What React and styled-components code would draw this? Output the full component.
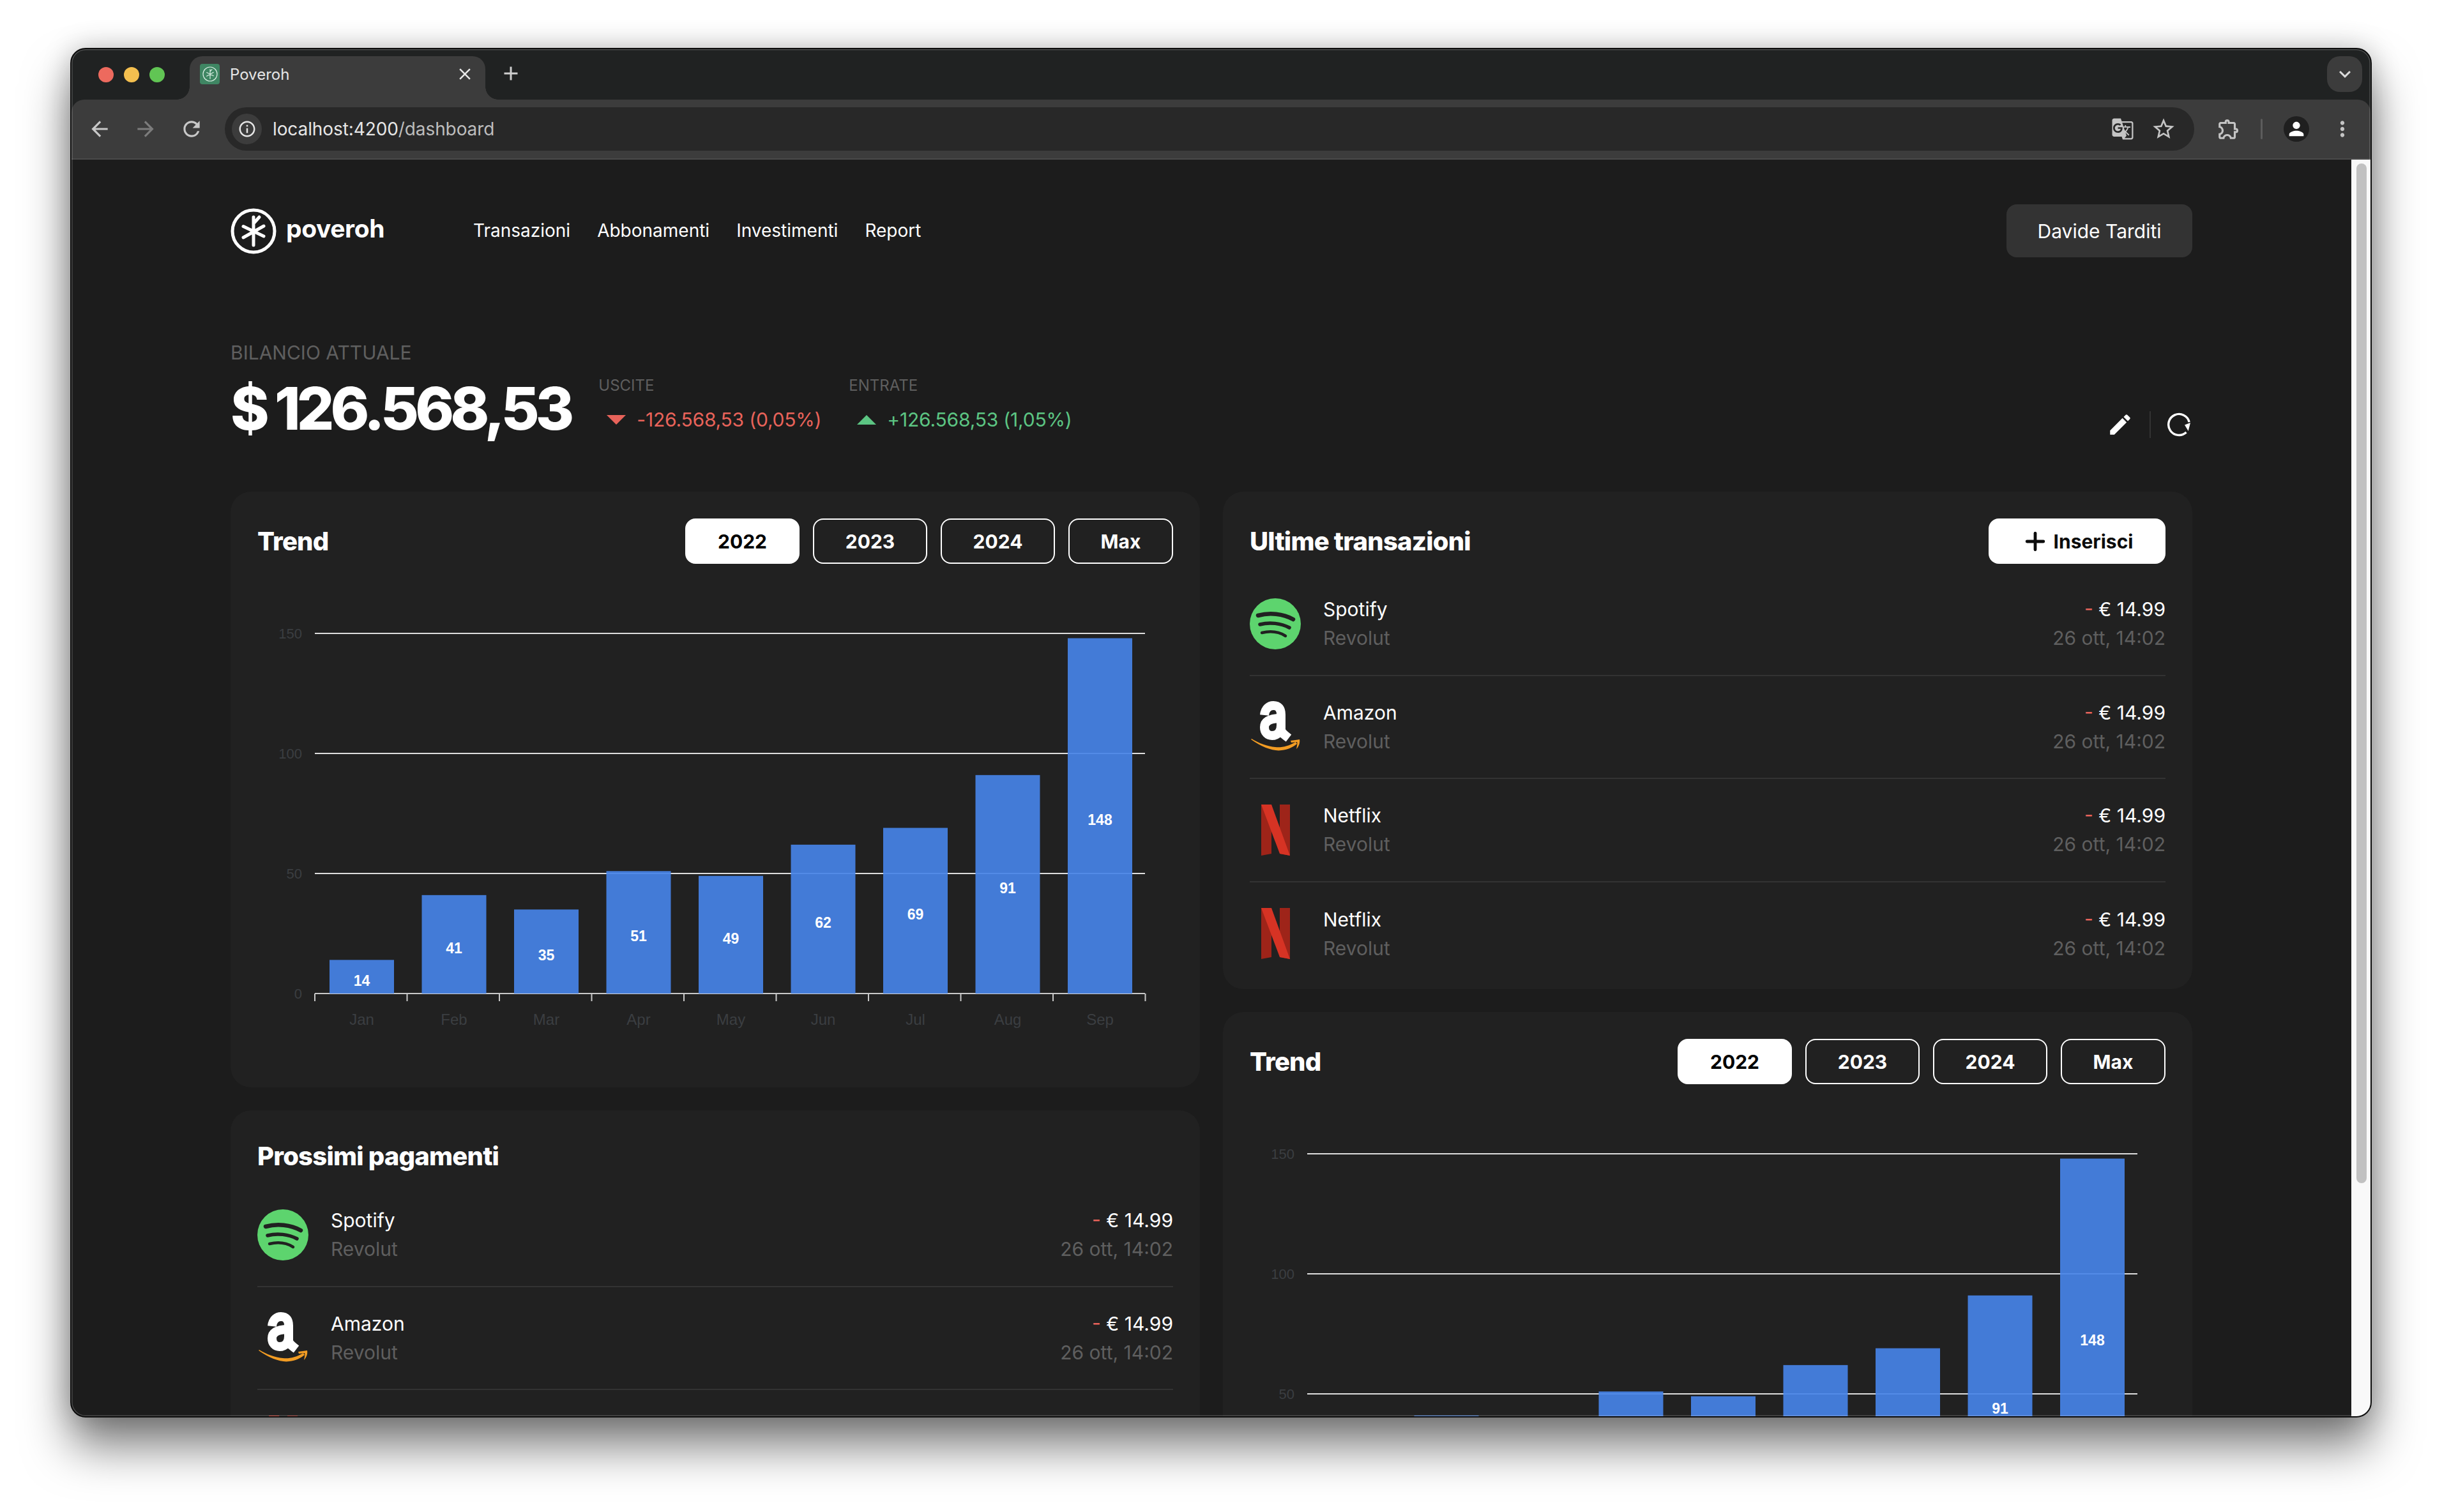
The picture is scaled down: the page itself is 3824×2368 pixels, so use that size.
import React from "react";
import styled, { createGlobalStyle } from "styled-components";
import { Plus } from "lucide-react";
import {
  MdArrowBack, MdArrowForward, MdRefresh, MdInfoOutline, MdStarBorder, MdGTranslate,
  MdOutlineExtension, MdPerson, MdMoreVert, MdKeyboardArrowDown, MdClose, MdAdd, MdEdit,
} from "react-icons/md";

const Global = createGlobalStyle`
  html, body { margin: 0; padding: 0; background: #fff; overflow: hidden; }
  * { box-sizing: border-box; }
  body { font-family: Inter, "Liberation Sans", sans-serif; }
`;

const Stage = styled.div`
  width: 3824px; height: 2368px; padding: 75px 110px 148px; background: #fff;
`;
const Window = styled.div`
  position: relative; height: 100%; display: flex; flex-direction: column; overflow: hidden;
  border-radius: 24px; border: 2px solid #0c0c0c; background: #202222;
  box-shadow: 0 46px 72px rgba(0,0,0,.5), 0 0 44px rgba(0,0,0,.22);
  &::after {
    content: ""; position: absolute; inset: 0; border-radius: 22px; pointer-events: none;
    box-shadow: inset 0 0 0 1.5px rgba(255,255,255,.2);
  }
`;
const TabStrip = styled.div`
  height: 79px; flex: none; background: #202222; display: flex; align-items: flex-end; padding-left: 42px;
`;
const Dots = styled.div`display: flex; gap: 16px; align-self: flex-start; margin-top: 28px; margin-right: 39px;`;
const Dot = styled.span`width: 24px; height: 24px; border-radius: 50%; background: ${p => p.$c};`;
const Tab = styled.div`
  position: relative; width: 463px; height: 68px; background: #3c3c3c; border-radius: 20px 20px 0 0;
  display: flex; align-items: flex-start; padding: 12px 16px 0; color: #e6e6e6; font-size: 24px; font-weight: 400;
  &::before, &::after {
    content: ""; position: absolute; bottom: 0; width: 20px; height: 20px;
  }
  &::before { left: -20px; background: radial-gradient(circle at 0 0, transparent 19.5px, #3c3c3c 20px); }
  &::after { right: -20px; background: radial-gradient(circle at 100% 0, transparent 19.5px, #3c3c3c 20px); }
`;
const Favicon = styled.span`
  width: 31px; height: 32px; border-radius: 4px; background: #3f8663; display: flex; align-items: center; justify-content: center; margin-right: 16px;
`;
const TabTitle = styled.span`flex: 1; line-height: 34px;`;
const TabClose = styled.span`display: flex; color: #e6e6e6; margin: 1px 0 0; position: relative; left: -1px; font-size: 30px;`;
const NewTab = styled.span`display: flex; color: #cfcfcf; font-size: 36px; align-self: flex-start; margin: 20px 0 0 22px;`;
const Collapse = styled.span`
  margin-left: auto; margin-right: 13px; align-self: flex-start; margin-top: 11px; width: 55px; height: 56px;
  border-radius: 20px; background: #3c3c3c; color: #dcdcdc; display: flex; align-items: center; justify-content: center; font-size: 36px;
`;
const Toolbar = styled.div`
  height: 94px; flex: none; background: #3c3c3c; border-bottom: 2px solid #4a4a4a; display: flex; align-items: center; padding-left: 8px;
  border-radius: 20px 20px 0 0;
`;
const NavBtn = styled.span`width: 72px; display: flex; justify-content: center; color: ${p => p.$dim ? "#7c7c7c" : "#c8c8c8"}; font-size: 38px;`;
const Omnibox = styled.div`
  margin-left: 16px; width: 3084px; height: 68px; border-radius: 34px; background: #282828; display: flex; align-items: center; padding: 0 28px 0 11px;
`;
const InfoPill = styled.span`
  width: 47px; height: 48px; border-radius: 50%; background: #3c3c3c; display: flex; align-items: center; justify-content: center; color: #e6e6e6; font-size: 30px; margin-right: 17px;
`;
const Url = styled.span`flex: 1; color: #e6e6e6; font-size: 28px; font-weight: 400; letter-spacing: -.1px;`;
const UrlPath = styled.span`color: #bdbdbd;`;
const BoxIcon = styled.span`display: flex; color: #c4c4c4; font-size: ${p => p.$s || 38}px; margin-left: ${p => p.$ml || 0}px;`;
const Sep = styled.span`width: 3px; height: 32px; background: #5c5c5c; margin: 0 33px 0 31px; border-radius: 2px;`;
const Avatar = styled.span`width: 40px; height: 40px; border-radius: 50%; background: #1f1f1f; color: #fff; display: flex; align-items: center; justify-content: center; font-size: 34px;`;

const Viewport = styled.div`flex: 1; min-height: 0; display: flex; background: #1c1c1c;`;
const Page = styled.div`flex: 1; min-width: 0; overflow: hidden; padding: 70px 249px 0; color: #fff;`;
const Scrollbar = styled.div`width: 30px; flex: none; background: #f9f9f9; padding: 6px 6px 0 8px;`;
const Thumb = styled.div`height: 1597px; background: #c1c1c1; border-radius: 8px;`;

const Header = styled.header`display: flex; align-items: center; height: 83px;`;
const Brand = styled.div`display: flex; align-items: center; width: 380px; gap: 15px;`;
const BrandName = styled.span`font-size: 39px; font-weight: 700; letter-spacing: -.4px; margin-top: -8px;`;
const Nav = styled.nav`display: flex; gap: 42px; font-size: 28px; font-weight: 400; margin-top: -2px;`;
const UserBtn = styled.button`
  margin-left: auto; width: 291px; height: 83px; border: 0; border-radius: 16px; background: #333; color: #fff; font: 400 30px Inter, sans-serif;
`;

const Balance = styled.section`display: flex; align-items: flex-start; margin-top: 131px; height: 236px;`;
const BalanceMain = styled.div`display: flex; flex-direction: column;`;
const BalanceLabel = styled.span`font-size: 30px; color: #5f5f5f; line-height: 36px;`;
const BalanceValue = styled.span`font-size: 92px; font-weight: 800; line-height: 116px; letter-spacing: -5.9px; margin-top: 12px;`;
const Stat = styled.div`display: flex; flex-direction: column; margin-left: 44px; padding-top: 55px; &+&{margin-left:43px;}`;
const StatLabel = styled.span`font-size: 24px; color: #5f5f5f; line-height: 30px;`;
const Delta = styled.span`display: flex; align-items: center; gap: 17px; font-size: 30px; letter-spacing: -.2px; color: ${p => p.$c}; margin: 20px 0 0 13px; line-height: 36px;`;
const Triangle = styled.span`
  width: 0; height: 0; border-left: 15px solid transparent; border-right: 15px solid transparent;
  ${p => p.$up ? `border-bottom: 15px solid ${p.$c};` : `border-top: 15px solid ${p.$c};`}
`;
const Actions = styled.div`margin-left: auto; display: flex; align-items: center; padding-top: 110px; padding-right: 2px; color: #fff;`;
const ActionDivider = styled.span`width: 2px; height: 42px; background: #333; margin: 0 25px 0 27px;`;
const Pencil = styled(MdEdit)`font-size: 42px; margin-right: -2px;`;

const Columns = styled.div`display: grid; grid-template-columns: 1518px 1518px; gap: 36px;`;
const Column = styled.div`display: flex; flex-direction: column; gap: 36px;`;
const Card = styled.section`background: #212121; border-radius: 32px; padding: 42px 42px 6px;`;
const CardHead = styled.div`display: flex; align-items: center; justify-content: space-between; height: ${p => p.$compact ? 59 : 71}px; margin-bottom: 14px;`;
const CardTitle = styled.h2`margin: 0; font-size: 40px; font-weight: 800; letter-spacing: -0.8px;`;
const Ranges = styled.div`display: flex; gap: 21px;`;
const RangeBtn = styled.button`
  width: ${p => p.$w || 179}px; height: 71px; border-radius: 16px; border: 2px solid #fff;
  background: ${p => p.$on ? "#fff" : "transparent"}; color: ${p => p.$on ? "#000" : "#fff"}; font: 700 30px Inter, sans-serif;
`;
const AddBtn = styled.button`
  width: 277px; height: 71px; border: 0; border-radius: 16px; background: #fff; color: #0c0c0c; font: 700 30px Inter, sans-serif;
  display: flex; align-items: center; justify-content: center; gap: 8px;
`;
const AddIcon = styled(Plus)`width: 44px; height: 44px; margin-right: -1px;`;
const ChartSvg = styled.svg`display: block; width: 1434px; height: 743px; margin-top: 37px; margin-bottom: 34px;`;
const AxisText = styled.text`font: 400 ${p => p.$s}px "Liberation Sans", Arial, sans-serif; fill: #3b3e41;`;
const BarText = styled.text`font: 700 23px "Liberation Sans", Arial, sans-serif; fill: #fff; text-anchor: middle;`;

const Row = styled.div`
  height: 161.5px; display: flex; align-items: center; border-bottom: ${p => p.$last ? "0" : "2px solid #333"};
`;
const Logo = styled.span`width: 80px; height: 80px; flex: none; margin-right: 35px; display: flex; align-items: center; justify-content: center;`;
const RowMain = styled.div`flex: 1; display: flex; flex-direction: column; gap: 9px;`;
const RowEnd = styled.div`display: flex; flex-direction: column; gap: 9px; align-items: flex-end;`;
const Primary = styled.span`font-size: 30px; line-height: 36px; color: #fff;`;
const Muted = styled.span`font-size: 30px; line-height: 36px; color: #5f5f5f;`;
const Minus = styled.span`color: #e8635a;`;

const BrandMark = ({ size = 72, sw = 5, color = "#fff" }) => (
  <svg width={size} height={size} viewBox="0 0 72 72" fill="none" stroke={color} strokeWidth={sw} strokeLinecap="round">
    <circle cx="36" cy="36" r="33" />
    <path d="M36 14V58M20 28.5L52 44M20 46L52 28M36 24L45 14" />
  </svg>
);

const Spotify = () => (
  <svg width="80" height="80" viewBox="0 0 80 80" fill="none" stroke="#212121" strokeLinecap="round">
    <circle cx="40" cy="40" r="40" fill="#5dd46e" stroke="none" />
    <path d="M13 27C31 22 52 24 68 33" strokeWidth="6.5" />
    <path d="M16 41C31 37 49 39 62 46" strokeWidth="5.5" />
    <path d="M19 54C32 51 45 52 56 59" strokeWidth="4.5" />
  </svg>
);
const Amazon = () => (
  <svg width="80" height="80" viewBox="0 0 80 80" fill="none">
    <path d="M23 22C24 11 31 7 37 7C45 7 49 12 49 21V44C49 49 53 52 61 58" stroke="#fff" strokeWidth="14" />
    <path d="M49 27C33 27 23 31 23 41C23 49 28 54 35 54C43 54 49 48 49 38" stroke="#fff" strokeWidth="14" />
    <path d="M2 60C20 73 38 79 50 77C60 76 68 72 74 67L72 64C60 71 50 73 40 72C28 71 14 66 3 59Z" fill="#f29c23" />
    <path d="M64 62L78 60C79 65 77 71 73 75C74 70 75 66 74 64L65 65Z" fill="#f29c23" />
  </svg>
);
const Netflix = () => (
  <svg width="45" height="80" viewBox="0 0 45 80">
    <path d="M0 0H16V77L0 80Z" fill="#9e2419" />
    <path d="M29 0H45V80L29 77Z" fill="#9e2419" />
    <path d="M0 0H16L45 80L29 77Z" fill="#d63324" />
  </svg>
);
const Reload = () => (
  <svg width="38" height="38" viewBox="0 0 38 38" fill="none">
    <path d="M35.2 15A16.5 16.5 0 1 0 30.5 31" stroke="#fff" strokeWidth="3.4" />
    <path d="M28 19.5L37 16L33.7 29Z" fill="#fff" />
  </svg>
);

const MONTHS = ["Jan", "Feb", "Mar", "Apr", "May", "Jun", "Jul", "Aug", "Sep"];
const VALUES = [14, 41, 35, 51, 49, 62, 69, 91, 148];
const X0 = 90, AXIS = 636, UNIT = 3.76, STEP = 144.5;

const TrendChart = () => (
  <ChartSvg viewBox="0 0 1434 743">
    {[150, 100, 50].map(v => (
      <rect key={v} x={X0} y={AXIS - v * UNIT - 1} width={1300} height="2" fill="#dedede" />
    ))}
    <rect x={X0} y={AXIS - 1} width={1300} height="2" fill="#c9c9c9" />
    {[0, 1, 2, 3, 4, 5, 6, 7, 8, 9].map(i => (
      <rect key={i} x={X0 + i * STEP - 1} y={AXIS} width="2" height="12" fill="#c9c9c9" />
    ))}
    {[150, 100, 50, 0].map(v => (
      <AxisText key={v} $s={22} x={70} y={AXIS - v * UNIT + 8} textAnchor="end">{v}</AxisText>
    ))}
    {VALUES.map((v, i) => {
      const h = v * UNIT;
      const x = X0 + i * STEP + 23;
      return (
        <g key={i}>
          <rect x={x} y={AXIS - h} width="101" height={h} fill="#4683e7" fillOpacity=".92" />
          <BarText x={x + 50.5} y={AXIS - h / 2 + 14}>{v}</BarText>
          <AxisText $s={24} x={x + 50.5} y={AXIS + 49} textAnchor="middle">{MONTHS[i]}</AxisText>
        </g>
      );
    })}
  </ChartSvg>
);

const TrendCard = () => (
  <Card>
    <CardHead>
      <CardTitle>Trend</CardTitle>
      <Ranges>
        <RangeBtn $on>2022</RangeBtn>
        <RangeBtn>2023</RangeBtn>
        <RangeBtn>2024</RangeBtn>
        <RangeBtn $w={164}>Max</RangeBtn>
      </Ranges>
    </CardHead>
    <TrendChart />
  </Card>
);

const TxRow = ({ logo, name, last }) => (
  <Row $last={last}>
    <Logo>{logo}</Logo>
    <RowMain>
      <Primary>{name}</Primary>
      <Muted>Revolut</Muted>
    </RowMain>
    <RowEnd>
      <Primary><Minus>-</Minus> € 14.99</Primary>
      <Muted>26 ott, 14:02</Muted>
    </RowEnd>
  </Row>
);

export default function App() {
  return (
    <Stage>
      <Global />
      <Window>
        <TabStrip>
          <Dots>
            <Dot $c="#ed6a5e" /><Dot $c="#f4bf4f" /><Dot $c="#61c554" />
          </Dots>
          <Tab>
            <Favicon><BrandMark size={24} sw={3.5} color="#dcefe5" /></Favicon>
            <TabTitle>Poveroh</TabTitle>
            <TabClose><MdClose /></TabClose>
          </Tab>
          <NewTab><MdAdd /></NewTab>
          <Collapse><MdKeyboardArrowDown /></Collapse>
        </TabStrip>
        <Toolbar>
          <NavBtn><MdArrowBack /></NavBtn>
          <NavBtn $dim><MdArrowForward /></NavBtn>
          <NavBtn><MdRefresh /></NavBtn>
          <Omnibox>
            <InfoPill><MdInfoOutline /></InfoPill>
            <Url>localhost:4200<UrlPath>/dashboard</UrlPath></Url>
            <BoxIcon $s={36}><MdGTranslate /></BoxIcon>
            <BoxIcon $s={40} $ml={26}><MdStarBorder /></BoxIcon>
          </Omnibox>
          <BoxIcon $s={38} $ml={35}><MdOutlineExtension /></BoxIcon>
          <Sep />
          <Avatar><MdPerson /></Avatar>
          <BoxIcon $s={38} $ml={33}><MdMoreVert /></BoxIcon>
        </Toolbar>
        <Viewport>
          <Page>
            <Header>
              <Brand><BrandMark /><BrandName>poveroh</BrandName></Brand>
              <Nav>
                <span>Transazioni</span>
                <span>Abbonamenti</span>
                <span>Investimenti</span>
                <span>Report</span>
              </Nav>
              <UserBtn>Davide Tarditi</UserBtn>
            </Header>
            <Balance>
              <BalanceMain>
                <BalanceLabel>BILANCIO ATTUALE</BalanceLabel>
                <BalanceValue>$ 126.568,53</BalanceValue>
              </BalanceMain>
              <Stat>
                <StatLabel>USCITE</StatLabel>
                <Delta $c="#e8635a"><Triangle $c="#e8635a" />-126.568,53 (0,05%)</Delta>
              </Stat>
              <Stat>
                <StatLabel>ENTRATE</StatLabel>
                <Delta $c="#5cc583"><Triangle $up $c="#5cc583" />+126.568,53 (1,05%)</Delta>
              </Stat>
              <Actions>
                <Pencil />
                <ActionDivider />
                <Reload />
              </Actions>
            </Balance>
            <Columns>
              <Column>
                <TrendCard />
                <Card>
                  <CardHead $compact><CardTitle>Prossimi pagamenti</CardTitle></CardHead>
                  <TxRow logo={<Spotify />} name="Spotify" />
                  <TxRow logo={<Amazon />} name="Amazon" />
                  <TxRow logo={<Netflix />} name="Netflix" />
                </Card>
              </Column>
              <Column>
                <Card>
                  <CardHead>
                    <CardTitle>Ultime transazioni</CardTitle>
                    <AddBtn><AddIcon strokeWidth={2.6} />Inserisci</AddBtn>
                  </CardHead>
                  <TxRow logo={<Spotify />} name="Spotify" />
                  <TxRow logo={<Amazon />} name="Amazon" />
                  <TxRow logo={<Netflix />} name="Netflix" />
                  <TxRow logo={<Netflix />} name="Netflix" last />
                </Card>
                <TrendCard />
              </Column>
            </Columns>
          </Page>
          <Scrollbar><Thumb /></Scrollbar>
        </Viewport>
      </Window>
    </Stage>
  );
}
